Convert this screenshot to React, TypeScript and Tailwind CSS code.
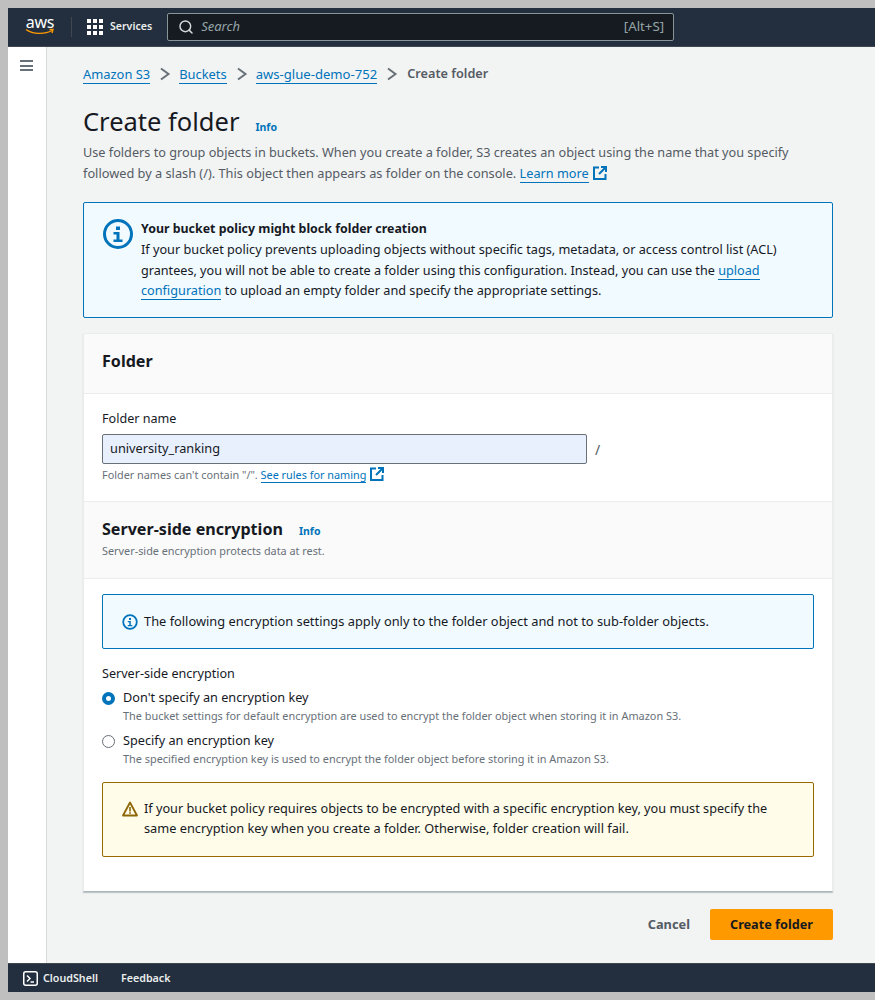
import { Search } from "lucide-react";

const font = { fontFamily: '"Noto Sans", sans-serif' };

function ExternalIcon() {
  return (
    <svg viewBox="0 0 14 14" className="inline-block w-[14px] h-[14px] ml-[4px] align-[-2px]" fill="none" stroke="#0073bb" strokeWidth="2">
      <path d="M6 1.5H1v11.5h11.5V8" />
      <path d="M8 1h5v5M13 1L6 8" />
    </svg>
  );
}

function InfoIcon({ size }: { size: "big" | "small" }) {
  if (size === "big") {
    return (
      <svg viewBox="0 0 30 30" className="w-[30px] h-[30px] shrink-0">
        <circle cx="15" cy="15" r="13.5" fill="none" stroke="#0073bb" strokeWidth="3" />
        <rect x="13" y="7.5" width="4" height="3.5" fill="#0073bb" />
        <path d="M10.5 13h6v7.5h3v2.5h-9v-2.5h3v-5h-3z" fill="#0073bb" />
      </svg>
    );
  }
  return (
    <svg viewBox="0 0 16 16" className="w-[16px] h-[16px] shrink-0">
      <circle cx="8" cy="8" r="6.8" fill="none" stroke="#0073bb" strokeWidth="1.8" />
      <rect x="7" y="4" width="2" height="2" fill="#0073bb" />
      <path d="M5.8 7h3v4h1.5v1.2H5.8V11h1.5V8.2H5.8z" fill="#0073bb" />
    </svg>
  );
}

function Chevron() {
  return (
    <svg viewBox="0 0 12 14" className="w-[12px] h-[14px]" fill="none" stroke="#687078" strokeWidth="2">
      <path d="M2 1.5L9.5 7L2 12.5" />
    </svg>
  );
}

function Crumb({ children }: { children: string }) {
  return <a className="text-[#0073bb] border-b border-[#0073bb] leading-[18px]">{children}</a>;
}

export default function App() {
  return (
    <div style={font} className="w-[875px] h-[1000px] bg-[#bfbfbf] pt-[8px] pb-[8px] pl-[8px] flex flex-col text-[14px] text-[#16191f] overflow-hidden">
      <header className="h-[39px] shrink-0 bg-[#232f3e] border-b border-[#414750] flex items-center pl-[17px]">
        <div className="w-[30px] flex flex-col items-center">
          <span className="text-[16px] leading-[14px] text-white tracking-[-0.2px] -mt-[4px]">aws</span>
          <svg viewBox="0 0 30 8" className="w-[30px] h-[8px] -mt-[1px]" fill="none" stroke="#ff9900" strokeWidth="1.4">
            <path d="M1 1.5C8 6.5 20 6.5 27 2.5" />
            <path d="M24.5 1.5h3.5L27 5" />
          </svg>
        </div>
        <div className="w-px h-[20px] bg-[#414750] ml-[16px]" />
        <div className="ml-[15px] grid grid-cols-3 gap-[2px]">
          {Array.from({ length: 9 }).map((_, i) => (
            <div key={i} className="w-[4px] h-[4px] bg-white" />
          ))}
        </div>
        <span className="ml-[7px] text-[10.6px] font-semibold text-[#eaeded]">Services</span>
        <div className="ml-[15px] w-[507px] h-[28px] bg-[#161b22] border border-[#879596] rounded-[2px] flex items-center pl-[10px] pr-[9px]">
          <Search size={16} color="#d5dbdb" strokeWidth={2.2} />
          <span className="ml-[7px] italic text-[#95a5a6] text-[13px]">Search</span>
          <span className="ml-auto text-[#95a5a6] text-[13.3px]">[Alt+S]</span>
        </div>
      </header>

      <div className="flex-1 flex min-h-0">
        <aside className="w-[39px] shrink-0 bg-white border-r border-[#d5dbdb] flex justify-center pt-[13px] pr-[2px]">
          <div className="w-[13px] h-[11px] flex flex-col gap-[2.5px]">
            <div className="h-[2px] bg-[#687078]" />
            <div className="h-[2px] bg-[#687078]" />
            <div className="h-[2px] bg-[#687078]" />
          </div>
        </aside>

        <main className="flex-1 bg-[#f2f3f3] pl-[36px] pr-[42px] min-w-0">
          <nav className="flex items-center h-[20px] mt-[17px] text-[12.9px]">
            <Crumb>Amazon S3</Crumb>
            <span className="ml-[9px] mr-[8px]"><Chevron /></span>
            <Crumb>Buckets</Crumb>
            <span className="ml-[9px] mr-[8px]"><Chevron /></span>
            <span className="flex text-[13.1px]"><Crumb>aws-glue-demo-752</Crumb></span>
            <span className="ml-[9px] mr-[9px]"><Chevron /></span>
            <span className="font-semibold text-[12.7px] text-[#545b64]">Create folder</span>
          </nav>

          <div className="flex items-baseline mt-[18px] h-[38px]">
            <h1 className="text-[25.5px] leading-[38px] font-normal">Create folder</h1>
            <a className="ml-[16px] text-[10.5px] font-bold text-[#0073bb]">Info</a>
          </div>
          <p className="mt-[2px] text-[12.7px] leading-[21px] text-[#545b64]">
            Use folders to group objects in buckets. When you create a folder, S3 creates an object using the name that you specify
            <br />
            <span className="text-[12.78px]">followed by a slash (/). This object then appears as folder on the console.</span>{" "}
            <a className="text-[#0073bb] border-b border-[#0073bb]">Learn more</a>
            <ExternalIcon />
          </p>

          <div className="mt-[18px] h-[116px] border border-[#0073bb] rounded-[2px] bg-[#f1faff] flex pl-[19px] pt-[16px]">
            <InfoIcon size="big" />
            <div className="ml-[8px] text-[12.7px] leading-[20.5px] text-[#16191f]">
              <div className="font-bold text-[12.4px] leading-[20px]">Your bucket policy might block folder creation</div>
              <div>
                If your bucket policy prevents uploading objects without specific tags, metadata, or access control list (ACL)
                <br />
                <span className="text-[12.63px]">grantees, you will not be able to create a folder using this configuration. Instead, you can use the</span>{" "}
                <a className="text-[#0073bb] border-b border-[#0073bb]">upload</a>
                <br />
                <a className="text-[#0073bb] border-b border-[#0073bb]">configuration</a> to upload an empty folder and specify the appropriate settings.
              </div>
            </div>
          </div>

          <section className="mt-[15px] h-[559px] bg-white border-l border-t border-r border-[#eaeded] border-b-[1px] border-b-[#aab7b8] shadow-[0_1px_1px_0_rgba(0,28,36,0.2)]">
            <div className="h-[60px] bg-[#fafafa] border-b border-[#eaeded] pl-[18px] pb-[5px] flex items-center">
              <h2 className="text-[16.1px] font-bold">Folder</h2>
            </div>

            <div className="h-[108px] pl-[18px] pt-[15px] border-b border-[#eaeded]">
              <label className="block text-[12.6px] leading-[20px]">Folder name</label>
              <div className="mt-[5px] flex items-center">
                <div className="w-[485px] h-[30px] bg-[#e8f0fe] border border-[#687078] rounded-[2px] flex items-center pl-[7px] text-[12.75px]">
                  university_ranking
                </div>
                <span className="ml-[8px] text-[#545b64] text-[14px]">/</span>
              </div>
              <div className="mt-[2px] text-[10.85px] leading-[18px] text-[#687078]">
                Folder names can't contain "/".{" "}
                <a className="text-[#0073bb] border-b border-[#0073bb]">See rules for naming</a>
                <ExternalIcon />
              </div>
            </div>

            <div className="h-[77px] bg-[#fafafa] border-b border-[#eaeded] pl-[18px] pt-[15px]">
              <div className="flex items-baseline">
                <h2 className="text-[16.1px] leading-[24px] font-bold">Server-side encryption</h2>
                <a className="ml-[16px] text-[10.5px] font-bold text-[#0073bb]">Info</a>
              </div>
              <div className="text-[10.85px] leading-[18px] text-[#687078] mt-[1px]">Server-side encryption protects data at rest.</div>
            </div>

            <div className="pl-[18px] pr-[18px] pt-[15px]">
              <div className="h-[55px] border border-[#0073bb] rounded-[2px] bg-[#f1faff] flex items-center pl-[19px] text-[12.84px]">
                <InfoIcon size="small" />
                <span className="ml-[6px]">The following encryption settings apply only to the folder object and not to sub-folder objects.</span>
              </div>

              <div className="mt-[15px] text-[12.6px] leading-[20px]">Server-side encryption</div>

              <div className="mt-[4px] flex">
                <div className="w-[13px] h-[13px] mt-[4px] rounded-full border-[4px] border-[#0073bb] bg-white shrink-0" />
                <div className="ml-[8px]">
                  <div className="text-[12.7px] leading-[19px]">Don't specify an encryption key</div>
                  <div className="text-[10.9px] leading-[17px] text-[#687078]">The bucket settings for default encryption are used to encrypt the folder object when storing it in Amazon S3.</div>
                </div>
              </div>

              <div className="mt-[7px] flex">
                <div className="w-[13px] h-[13px] mt-[4px] rounded-full border border-[#687078] bg-white shrink-0" />
                <div className="ml-[8px]">
                  <div className="text-[12.7px] leading-[19px]">Specify an encryption key</div>
                  <div className="text-[10.9px] leading-[17px] text-[#687078]">The specified encryption key is used to encrypt the folder object before storing it in Amazon S3.</div>
                </div>
              </div>

              <div className="mt-[15px] h-[75px] border border-[#9a6700] rounded-[2px] bg-[#fffce9] flex pl-[19px] pt-[15px]">
                <svg viewBox="0 0 16 16" className="w-[16px] h-[16px] shrink-0 mt-[3px]">
                  <path d="M8 1.5L15 14.5H1Z" fill="none" stroke="#8d6605" strokeWidth="1.8" strokeLinejoin="round" />
                  <rect x="7.2" y="6" width="1.6" height="4.5" fill="#8d6605" />
                  <rect x="7.2" y="11.2" width="1.6" height="1.6" fill="#8d6605" />
                </svg>
                <div className="ml-[6px] text-[12.7px] leading-[20px]">
                  If your bucket policy requires objects to be encrypted with a specific encryption key, you must specify the
                  <br />
                  <span className="text-[12.78px]">same encryption key when you create a folder. Otherwise, folder creation will fail.</span>
                </div>
              </div>
            </div>
          </section>

          <div className="mt-[17px] flex justify-end items-center">
            <a className="text-[12.8px] font-bold text-[#545b64] mr-[20px]">Cancel</a>
            <button className="w-[123px] h-[31px] bg-[#ff9900] rounded-[2px] text-[12.7px] font-bold text-[#16191f]">Create folder</button>
          </div>
        </main>
      </div>

      <footer className="h-[29px] shrink-0 bg-[#232f3e] border-t border-[#414750] flex items-center pl-[15px] text-[10.7px] font-semibold text-[#eaeded]">
        <svg viewBox="0 0 15 15" className="w-[15px] h-[15px]">
          <rect x="0.75" y="0.75" width="13.5" height="13.5" rx="2" fill="none" stroke="#fff" strokeWidth="1.5" />
          <path d="M4 4.5L7 7.5L4 10.5" fill="none" stroke="#fff" strokeWidth="1.5" />
          <path d="M7.5 11h3.5" stroke="#fff" strokeWidth="1.5" />
        </svg>
        <span className="ml-[5px]">CloudShell</span>
        <span className="ml-[23px]">Feedback</span>
      </footer>
    </div>
  );
}
